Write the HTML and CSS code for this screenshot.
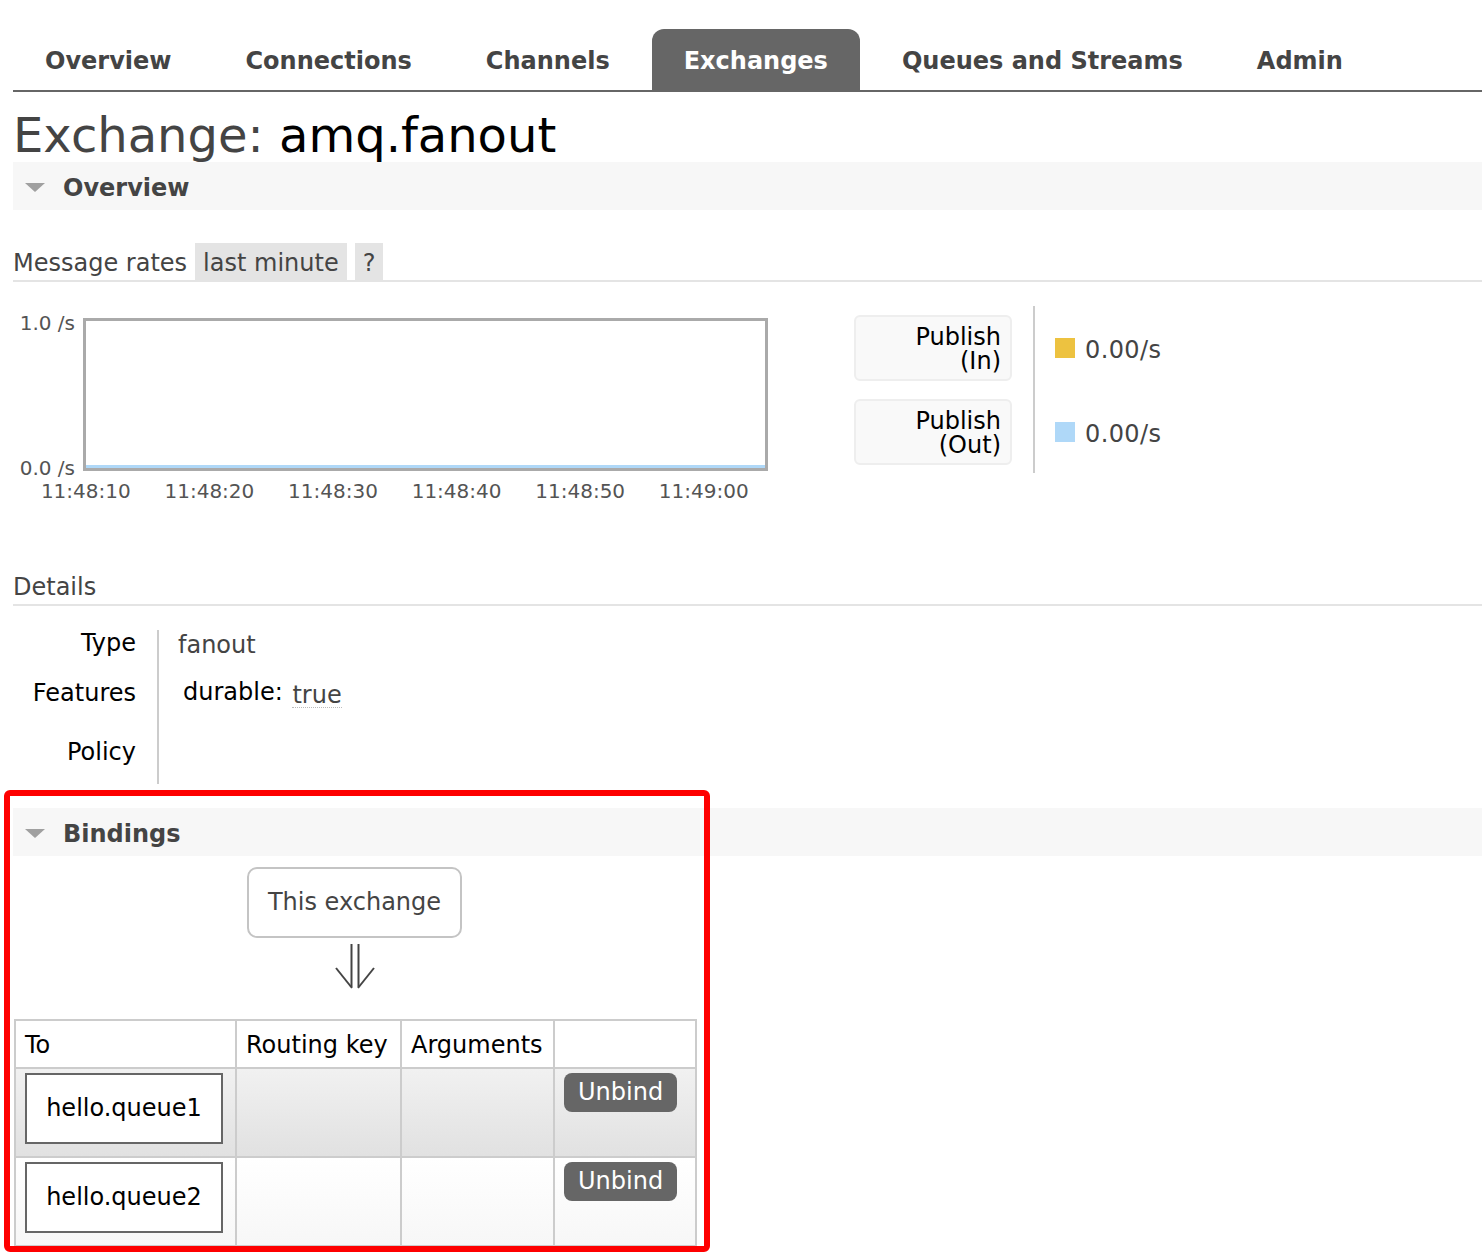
FILE: index.html
```html
<!DOCTYPE html>
<html>
<head>
<meta charset="utf-8">
<title>Exchange: amq.fanout</title>
<link rel="stylesheet" href="styles.css">
</head>
<body>
<div class="page">
  <ul class="tabs">
    <li><a>Overview</a></li>
    <li><a>Connections</a></li>
    <li><a>Channels</a></li>
    <li class="active"><a>Exchanges</a></li>
    <li><a>Queues and Streams</a></li>
    <li><a>Admin</a></li>
  </ul>

  <h1><span class="h1-label">Exchange:</span> <b class="h1-name">amq.fanout</b></h1>

  <div class="section">
    <div class="section-head"><span class="tri"></span>Overview</div>
    <div class="section-body">
      <h3 class="subhead"><span class="subhead-text">Message rates</span><span class="tag">last minute</span><span class="tag">?</span></h3>

      <div class="chart-row">
        <div class="chart">
          <div class="y-labels">
            <span class="y-top">1.0 /s</span>
            <span class="y-bottom">0.0 /s</span>
          </div>
          <div class="plot"><div class="series-line"></div></div>
          <div class="x-labels">
            <span>11:48:10</span>
            <span>11:48:20</span>
            <span>11:48:30</span>
            <span>11:48:40</span>
            <span>11:48:50</span>
            <span>11:49:00</span>
          </div>
        </div>

        <div class="legend">
          <div class="legend-labels">
            <div class="legend-box"><span class="legend-line">Publish</span><span class="legend-line">(In)</span></div>
            <div class="legend-box"><span class="legend-line">Publish</span><span class="legend-line">(Out)</span></div>
          </div>
          <div class="legend-divider"></div>
          <div class="legend-values">
            <div class="legend-value"><span class="swatch swatch-in"></span>0.00/s</div>
            <div class="legend-value"><span class="swatch swatch-out"></span>0.00/s</div>
          </div>
        </div>
      </div>

      <h3 class="subhead subhead-details"><span class="subhead-text">Details</span></h3>

      <table class="facts">
        <tr class="row-type"><th>Type</th><td><span class="val">fanout</span></td></tr>
        <tr class="row-features"><th>Features</th><td>durable: <abbr class="val true">true</abbr></td></tr>
        <tr class="row-policy"><th>Policy</th><td></td></tr>
      </table>
    </div>
  </div>

  <div class="section section-bindings">
    <div class="section-head"><span class="tri"></span>Bindings</div>
    <div class="bindings">
      <div class="this-exchange">This exchange</div>
      <svg class="arrow" width="40" height="46" viewBox="0 0 40 46">
        <line x1="16.5" y1="1" x2="16.5" y2="44" stroke="#444" stroke-width="2"/>
        <line x1="23.5" y1="1" x2="23.5" y2="44" stroke="#444" stroke-width="2"/>
        <line x1="1" y1="25" x2="17" y2="45" stroke="#444" stroke-width="2"/>
        <line x1="39" y1="25" x2="23" y2="45" stroke="#444" stroke-width="2"/>
      </svg>
      <table class="list">
        <colgroup>
          <col class="c-to"><col class="c-key"><col class="c-args"><col class="c-act">
        </colgroup>
        <thead>
          <tr><th>To</th><th>Routing key</th><th>Arguments</th><th></th></tr>
        </thead>
        <tbody>
          <tr class="alt1">
            <td><span class="queue">hello.queue1</span></td>
            <td></td><td></td>
            <td><span class="btn">Unbind</span></td>
          </tr>
          <tr class="alt2">
            <td><span class="queue">hello.queue2</span></td>
            <td></td><td></td>
            <td><span class="btn">Unbind</span></td>
          </tr>
        </tbody>
      </table>
    </div>
  </div>

  <div class="annotation"></div>
</div>
</body>
</html>
```

FILE: styles.css
```css
html, body {
  margin: 0;
  padding: 0;
  background: #fff;
}

body {
  font-family: "DejaVu Sans", Verdana, sans-serif;
  font-size: 24px;
  line-height: 24px;
  color: #000;
}

.page {
  position: relative;
  padding-left: 13px;
  min-height: 1258px;
}

/* Tabs */
.tabs {
  list-style: none;
  margin: 0;
  padding: 29px 0 0;
  display: flex;
  gap: 10px;
  border-bottom: 2px solid #666;
}

.tabs a {
  display: block;
  padding: 4px 32px 0;
  line-height: 57px;
  font-weight: bold;
  color: #444;
  border-radius: 12px 12px 0 0;
}

.tabs .active a {
  background: #666;
  color: #fff;
}

/* Heading */
h1 {
  margin: 19px 0 3px;
  font-size: 48px;
  line-height: 48px;
  font-weight: normal;
}

.h1-label { color: #444; }
.h1-name { color: #000; font-weight: normal; }

/* Sections */
.section-head {
  display: flex;
  align-items: center;
  box-sizing: border-box;
  height: 48px;
  padding: 3px 0 0 12px;
  background: #f7f7f7;
  font-weight: bold;
  color: #444;
}

.tri {
  width: 0;
  height: 0;
  border-left: 10px solid transparent;
  border-right: 10px solid transparent;
  border-top: 9px solid #a0a0a0;
  margin-right: 18px;
  margin-top: -1px;
}

.section-body {
  padding-top: 33px;
}

.subhead {
  display: flex;
  align-items: flex-end;
  height: 37px;
  margin: 0;
  font-size: 24px;
  font-weight: normal;
  color: #444;
  border-bottom: 2px solid #e4e4e4;
}

.subhead-text {
  padding-top: 3px;
  line-height: 34px;
}

.tag {
  padding: 3px 8px 0;
  line-height: 34px;
  background: #e4e4e4;
  margin-left: 8px;
}

.subhead-details {
  margin-top: 66px;
}

/* Chart */
.chart-row {
  display: flex;
  margin-top: 24px;
}

.chart {
  width: 755px;
  padding-top: 12px;
  display: grid;
  grid-template-columns: 70px 685px;
  grid-template-rows: 153px auto;
}

.y-labels {
  display: flex;
  flex-direction: column;
  justify-content: space-between;
  align-items: flex-end;
  padding-right: 8px;
  font-size: 20px;
  line-height: 20px;
  color: #545454;
}

.y-top { margin-top: -5px; }
.y-bottom { margin-bottom: -7px; }

.plot {
  box-sizing: border-box;
  border: 3px solid #aaa;
  display: flex;
  flex-direction: column;
  justify-content: flex-end;
  background: #fff;
}

.series-line {
  height: 3px;
  background: #afd8f8;
}

.x-labels {
  grid-column: 1 / 3;
  display: flex;
  padding-left: 11px;
  margin-top: 10px;
  font-size: 20px;
  line-height: 20px;
  color: #545454;
}

.x-labels span {
  width: 123.6px;
  text-align: center;
}

/* Legend */
.legend {
  display: flex;
  margin-left: 86px;
  height: 167px;
}

.legend-labels,
.legend-values {
  display: flex;
  flex-direction: column;
  gap: 18px;
  padding-top: 9px;
}

.legend-box {
  box-sizing: border-box;
  width: 158px;
  height: 66px;
  border: 2px solid #eee;
  border-radius: 6px;
  background: #f9f9f9;
  display: flex;
  flex-direction: column;
  align-items: flex-end;
  padding: 8px 9px 0 0;
}

.legend-line {
  display: block;
  line-height: 24px;
}

.legend-divider {
  border-left: 2px solid #ccc;
  margin-left: 21px;
}

.legend-values {
  margin-left: 20px;
}

.legend-value {
  height: 66px;
  display: flex;
  align-items: center;
  padding-top: 3px;
  box-sizing: border-box;
  color: #444;
  letter-spacing: 0.4px;
}

.swatch {
  width: 20px;
  height: 20px;
  margin-right: 10px;
  margin-top: -3px;
}

.swatch-in { background: #edc240; }
.swatch-out { background: #afd8f8; }

/* Details */
.facts {
  margin-top: 24px;
  border-collapse: collapse;
}

.facts th {
  width: 123px;
  text-align: right;
  font-weight: normal;
  vertical-align: top;
  border-right: 2px solid #ccc;
  padding: 0 21px 25px 0;
}

.facts td {
  vertical-align: top;
  padding: 3px 0 22px 19px;
}

.facts th, .facts td { padding-top: 1px; }
.facts .row-type td { padding-top: 3px; }
.facts .row-features th { padding-bottom: 31px; }
.facts .row-features td { padding: 0 0 31px 24px; }
.facts .row-policy th { padding-bottom: 20px; }
.facts .row-policy td { padding: 0 0 20px 19px; }

.val { color: #444; }

.true {
  display: inline-block;
  text-decoration: none;
  line-height: 24px;
  border-bottom: 1px dotted #bbb;
  vertical-align: -3px;
  margin-left: 2px;
}

/* Bindings */
.section-bindings {
  margin-top: 24px;
}

.bindings {
  width: 681px;
  margin-left: 1px;
  padding-top: 11px;
}

.this-exchange {
  box-sizing: border-box;
  width: 215px;
  height: 71px;
  margin: 0 auto;
  border: 2px solid #c4c4c4;
  border-radius: 10px;
  text-align: center;
  line-height: 67px;
  color: #444;
}

.arrow {
  display: block;
  margin: 5px auto 0;
}

.list {
  margin-top: 30px;
  width: 681px;
  table-layout: fixed;
  border-collapse: collapse;
  border: 2px solid #ccc;
}

.c-to { width: 221px; }
.c-key { width: 165px; }
.c-args { width: 153px; }
.c-act { width: 142px; }

.list th,
.list td {
  border: 2px solid #ccc;
  text-align: left;
  vertical-align: top;
}

.list th {
  font-weight: normal;
  padding: 12px 9px 10px;
  background: #fff;
}

.list td {
  padding: 4px 9px 12px;
}

.list tr.alt1 td {
  background: linear-gradient(#f1f1f1, #e1e1e1);
}

.list tr.alt2 td {
  background: linear-gradient(#fff, #f7f7f7);
}

.queue {
  display: block;
  box-sizing: border-box;
  width: 198px;
  height: 71px;
  border: 2px solid #666;
  background: #fff;
  text-align: center;
  line-height: 67px;
}

.btn {
  display: inline-block;
  background: #666;
  color: #fff;
  border-radius: 8px;
  padding: 0 14px;
  line-height: 39px;
}

/* Red highlight drawn over the bindings section */
.annotation {
  position: absolute;
  left: 4px;
  top: 790px;
  width: 706px;
  height: 462px;
  box-sizing: border-box;
  border: 6px solid #fe0000;
  border-radius: 6px;
  pointer-events: none;
}
```
